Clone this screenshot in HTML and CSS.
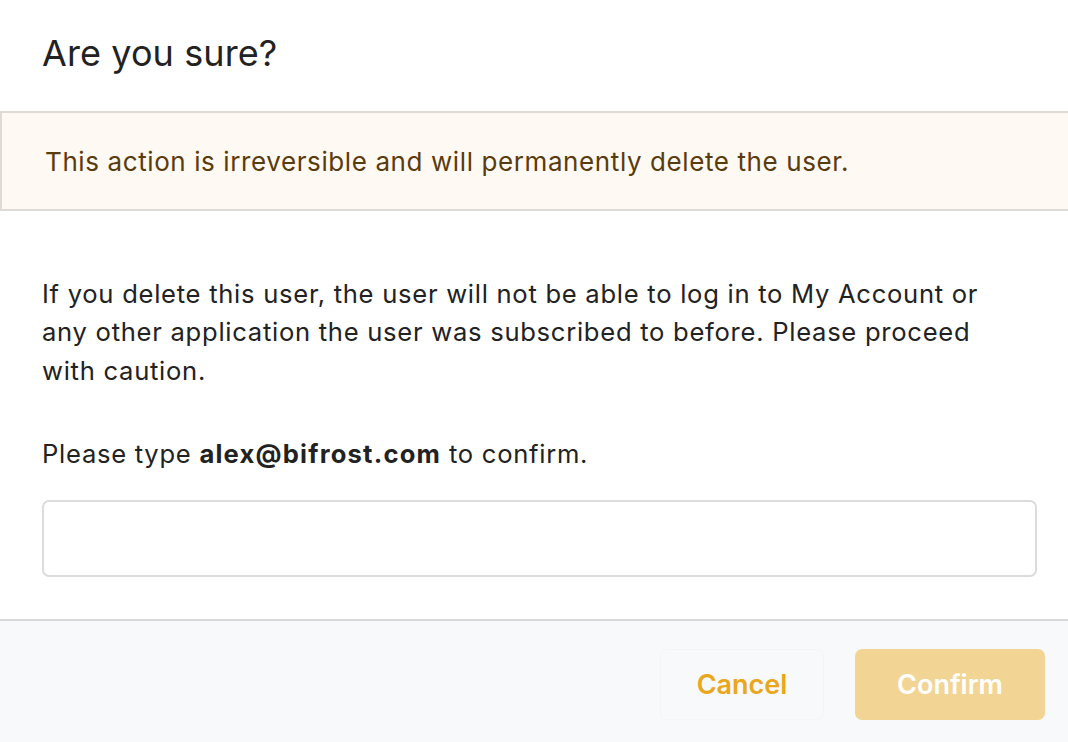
FILE: index.html
```html
<!DOCTYPE html>
<html lang="en">
<head>
<meta charset="utf-8">
<title>Are you sure?</title>
<link rel="stylesheet" href="styles.css">
</head>
<body>
<div class="modal">
  <header class="modal-header">
    <h2 class="modal-title">Are you sure?</h2>
  </header>
  <div class="alert">This action is irreversible and will permanently delete the user.</div>
  <div class="modal-body">
    <p class="desc">If you delete this user, the user will not be able to log in to My Account or any other application the user was subscribed to before. Please proceed with caution.</p>
    <p class="confirm-text">Please type <strong>alex@bifrost.com</strong> to confirm.</p>
    <input class="confirm-input" type="text" aria-label="Email">
  </div>
  <footer class="modal-footer">
    <button class="btn btn-cancel" type="button">Cancel</button>
    <button class="btn btn-confirm" type="button" disabled>Confirm</button>
  </footer>
</div>
</body>
</html>
```

FILE: styles.css
```css
* { box-sizing: border-box; }
html, body {
  margin: 0;
  padding: 0;
  background: #fff;
}
body {
  font-family: Inter, "Noto Sans", "Liberation Sans", sans-serif;
  color: #222;
  width: 1068px;
  height: 742px;
  overflow: hidden;
}
.modal {
  display: flex;
  flex-direction: column;
  height: 742px;
}
.modal-header {
  padding: 30px 42px 35px;
}
.modal-title {
  margin: 0;
  font-size: 36px;
  line-height: 46px;
  font-weight: 400;
  color: #222;
  letter-spacing: 0.1px;
}
.alert {
  background: #fef9f3;
  border: 2px solid #dedbd7;
  border-right: none;
  color: #5a3b0c;
  font-size: 26px;
  letter-spacing: 0.6px;
  line-height: 38px;
  padding: 30px 42px 28px 43px;
}
.modal-body {
  padding: 64px 31px 42px 42px;
  font-size: 25.6px;
  line-height: 38.4px;
  letter-spacing: 0.72px;
  color: #222;
}
.modal-body p {
  margin: 0;
}
.desc {
  padding-right: 30px;
}
.confirm-text {
  margin-top: 45px !important;
}
.confirm-text strong {
  font-weight: 700;
  letter-spacing: 1.2px;
}
.confirm-input {
  display: block;
  width: 100%;
  height: 77px;
  margin-top: 26px;
  border: 2px solid #dcdcdc;
  border-radius: 7px;
  background: #fff;
  font: inherit;
  padding: 0 16px;
}
.modal-footer {
  flex: 1;
  background: #f8f9fa;
  border-top: 2px solid #d8d9db;
  display: flex;
  justify-content: flex-end;
  align-items: flex-start;
  gap: 31px;
  padding: 28px 23px 0 0;
}
.btn {
  font-family: Inter, "Noto Sans", "Liberation Sans", sans-serif;
  font-size: 27px;
  font-weight: 600;
  height: 71px;
  border-radius: 7px;
  cursor: pointer;
}
.btn-cancel {
  width: 164px;
  background: #f8f9fa;
  border: 1px solid #f4f5f6;
  color: #eaa71c;
}
.btn-confirm {
  width: 190px;
  background: #f2d595;
  border: none;
  color: #fff;
}
```
